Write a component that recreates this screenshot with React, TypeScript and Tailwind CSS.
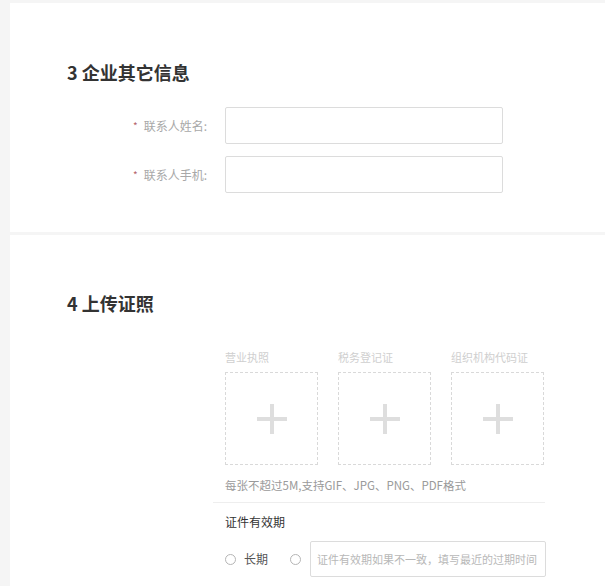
import React from "react";

const font = { fontFamily: '"Noto Sans CJK SC", "Noto Sans", sans-serif' };

function Field({ label }: { label: string }) {
  return (
    <div className="flex items-center">
      <div className="w-[197px] flex justify-end items-center text-[12px] leading-[16px] text-[#a8a8a8]">
        <span className="text-[#b5656a] text-[10px] mr-[6px]">*</span>
        <span>{label}</span>
      </div>
      <div className="ml-[18px] w-[278px] h-[37px] border border-[#dcdcdc] rounded-[2px] bg-white" />
    </div>
  );
}

function Upload({ label }: { label: string }) {
  return (
    <div className="flex flex-col w-[93px]">
      <div className="text-[11px] leading-[16px] text-[#cfcfcf] whitespace-nowrap">{label}</div>
      <div className="mt-[7px] w-[93px] h-[93px] border border-dashed border-[#d9d9d9] flex items-center justify-center">
        <div className="relative w-[30px] h-[30px]">
          <div className="absolute left-0 top-[13px] w-[30px] h-[4px] bg-[#dedede]" />
          <div className="absolute top-0 left-[13px] h-[30px] w-[4px] bg-[#dedede]" />
        </div>
      </div>
    </div>
  );
}

function Radio() {
  return <div className="w-[11px] h-[11px] rounded-full border border-[#b5b5b5] bg-white" />;
}

export default function App() {
  return (
    <div style={font} className="w-[605px] h-[586px] bg-[#f5f5f5] pl-[10px] pt-[3px] flex flex-col gap-[3px] overflow-hidden">
      <div className="bg-white h-[229px] shrink-0 pl-[57px] pt-[60px]">
        <div className="text-[18px] leading-[18px] font-semibold text-[#333]">3 企业其它信息</div>
        <div className="-ml-[57px] mt-[26px] flex flex-col gap-[12px]">
          <Field label="联系人姓名:" />
          <Field label="联系人手机:" />
        </div>
      </div>
      <div className="bg-white flex-1 pt-[59px]">
        <div className="pl-[57px] text-[18px] leading-[18px] font-semibold text-[#333]">4 上传证照</div>
        <div className="pl-[215px] mt-[37px]">
          <div className="flex gap-[20px]">
            <Upload label="营业执照" />
            <Upload label="税务登记证" />
            <Upload label="组织机构代码证" />
          </div>
          <div className="mt-[12px] text-[11.5px] leading-[16px] text-[#9a9a9a]">每张不超过5M,支持GIF、JPG、PNG、PDF格式</div>
          <div className="mt-[9px] -ml-[12px] w-[332px] h-px bg-[#eeeeee]" />
          <div className="mt-[11px] text-[12px] leading-[16px] text-[#333]">证件有效期</div>
          <div className="mt-[11px] flex items-center">
            <Radio />
            <span className="ml-[8px] text-[12px] text-[#555]">长期</span>
            <div className="ml-[22px]">
              <Radio />
            </div>
            <div className="ml-[9px] w-[236px] h-[36px] border border-[#dcdcdc] rounded-[2px] flex items-center pl-[6px] text-[11px] text-[#b8b8b8] whitespace-nowrap">
              证件有效期如果不一致，填写最近的过期时间
            </div>
          </div>
        </div>
      </div>
    </div>
  );
}
